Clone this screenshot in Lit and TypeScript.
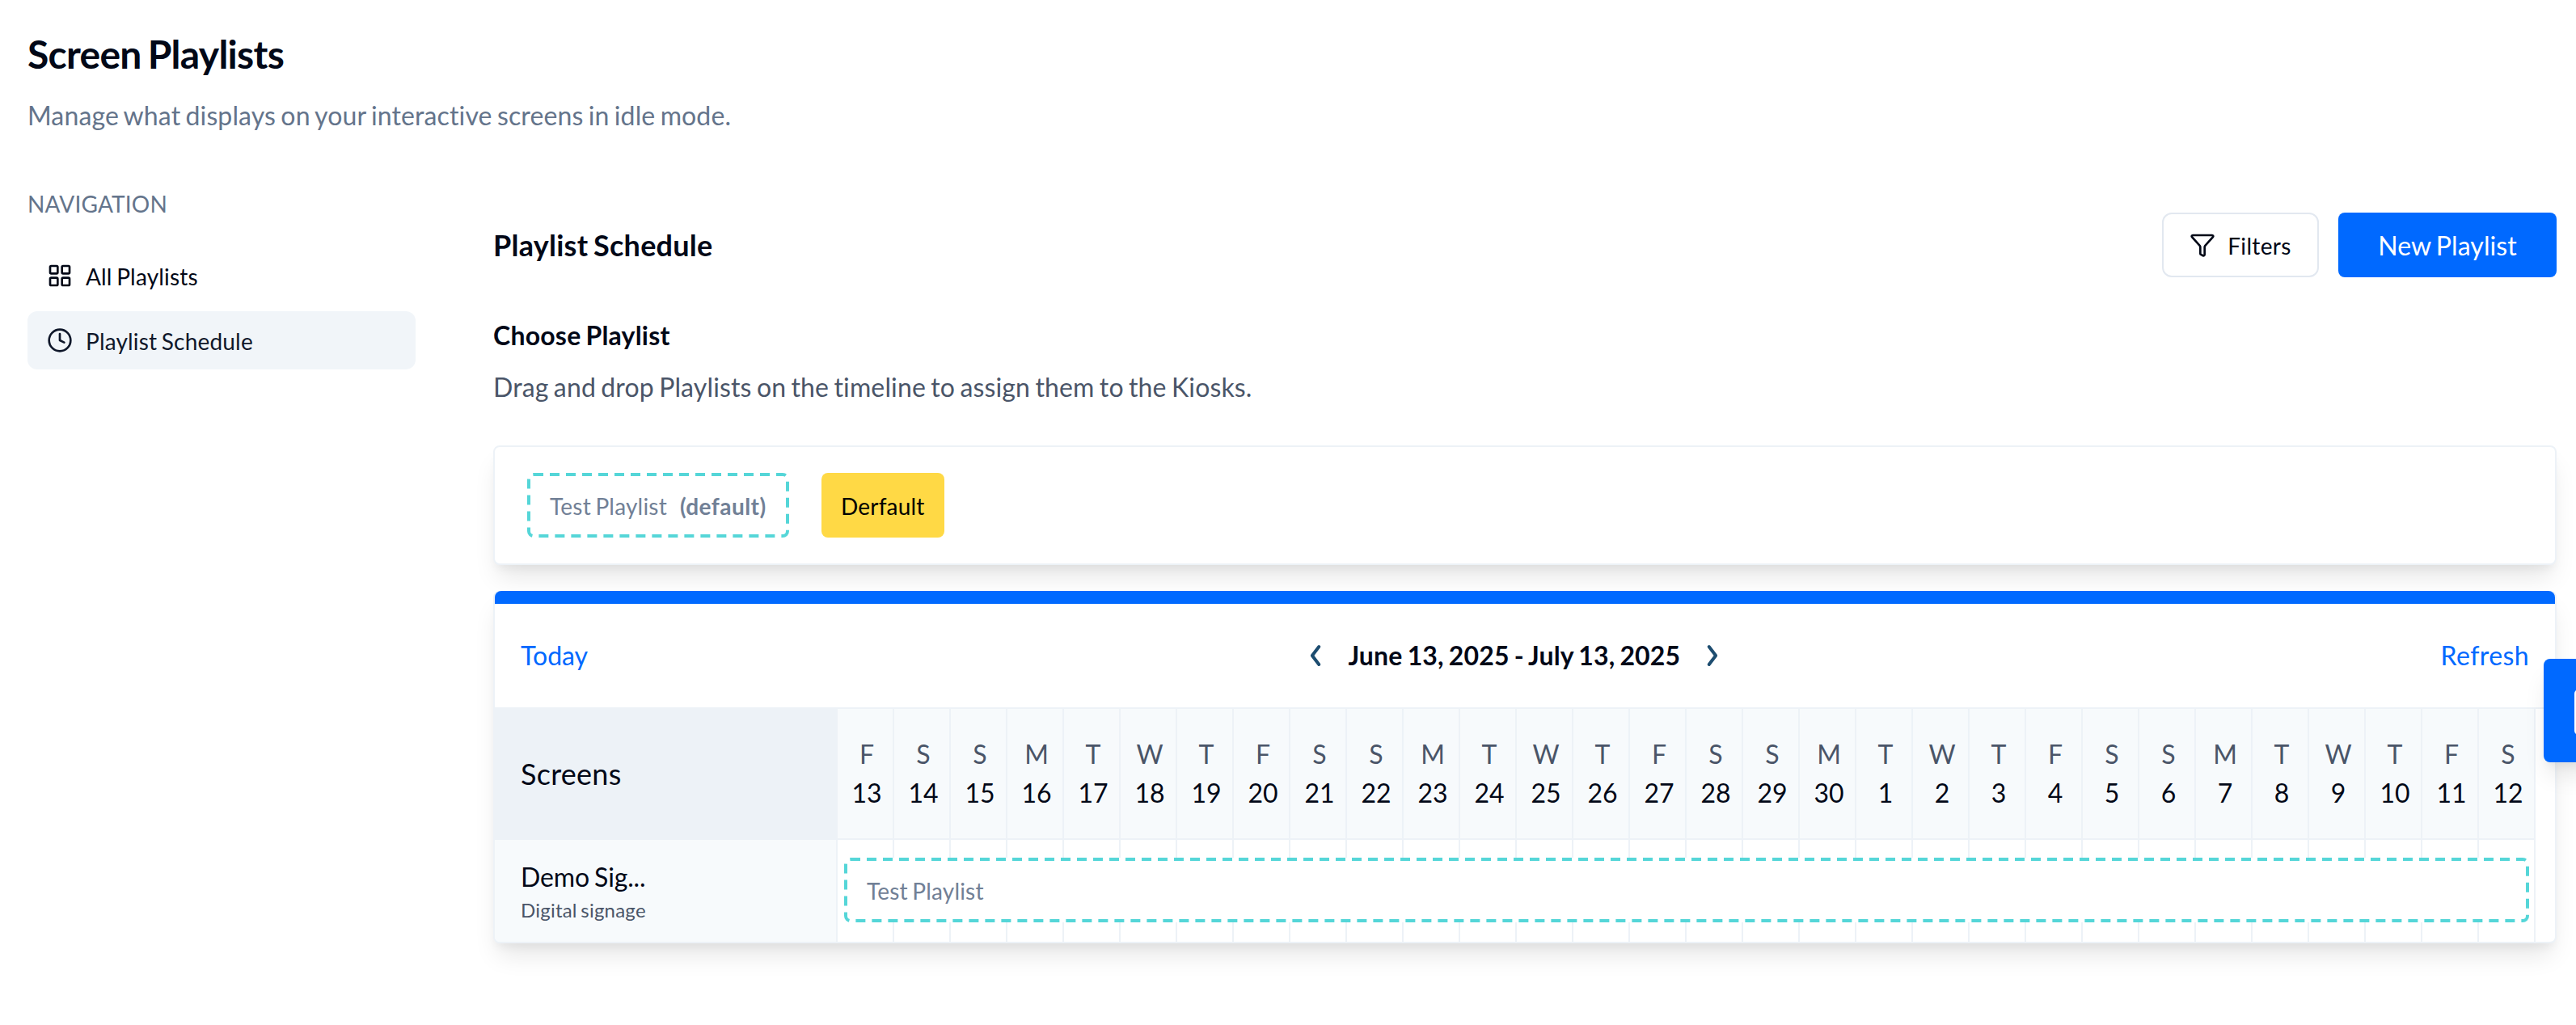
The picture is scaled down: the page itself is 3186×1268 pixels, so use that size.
import { LitElement, html, css, svg } from "lit";
import { customElement } from "lit/decorators.js";

const WEEKDAYS = ["S", "M", "T", "W", "T", "F", "S"];
const START = Date.UTC(2025, 5, 13);
const DAYS = Array.from({ length: 30 }, (_, i) => {
  const d = new Date(START + i * 86400000);
  return { letter: WEEKDAYS[d.getUTCDay()], num: d.getUTCDate() };
});

const icon = (cls: string, body: unknown) => html`
  <svg class=${cls} viewBox="0 0 24 24" fill="none" stroke="currentColor" stroke-width="2"
    stroke-linecap="round" stroke-linejoin="round">${body}</svg>`;

const gridIcon = svg`<rect width="7" height="7" x="3" y="3" rx="1"/><rect width="7" height="7" x="14" y="3" rx="1"/><rect width="7" height="7" x="14" y="14" rx="1"/><rect width="7" height="7" x="3" y="14" rx="1"/>`;
const clockIcon = svg`<circle cx="12" cy="12" r="10"/><polyline points="12 6 12 12 16 14"/>`;
const funnelIcon = svg`<path d="M10 20a1 1 0 0 0 .553.895l2 1A1 1 0 0 0 14 21v-7a2 2 0 0 1 .517-1.341L21.74 4.67A1 1 0 0 0 21 3H3a1 1 0 0 0-.742 1.67l7.225 7.989A2 2 0 0 1 10 14z"/>`;

@customElement("playlist-sidebar")
export class PlaylistSidebar extends LitElement {
  static styles = css`
    :host { display: block; width: 480px; flex: none; }
    .heading { color: #64748b; font-size: 28px; line-height: 40px; letter-spacing: 0.2px; }
    .items { display: flex; flex-direction: column; gap: 8px; margin-top: 33px; }
    .item {
      display: flex; align-items: center; height: 72px; padding: 0 24px; gap: 16px;
      border-radius: 12px; font-size: 28px; line-height: 40px; color: #020817; letter-spacing: 0.18px;
    }
    .item.active { background: #f1f5f9; color: #0f172a; }
    .label { padding-top: 2px; }
    .icon { width: 32px; height: 32px; display: block; }
  `;
  render() {
    return html`
      <div class="heading">NAVIGATION</div>
      <div class="items">
        <div class="item">${icon("icon", gridIcon)}<span class="label">All Playlists</span></div>
        <div class="item active">${icon("icon", clockIcon)}<span class="label">Playlist Schedule</span></div>
      </div>`;
  }
}

@customElement("playlist-timeline")
export class PlaylistTimeline extends LitElement {
  static styles = css`
    :host { display: block; }
    .card {
      box-sizing: border-box; height: 436px; border: 2px solid #edf2f7; border-top: 0;
      border-radius: 8px; background: #fff;
      box-shadow: 0 20px 30px -6px rgba(0, 0, 0, 0.1), 0 8px 12px -4px rgba(0, 0, 0, 0.05);
    }
    .accent { height: 16px; background: #0069ff; border-radius: 8px 8px 0 0; }
    .bar {
      display: flex; justify-content: space-between; align-items: center;
      height: 128px; padding: 0 32px; font-size: 32px; line-height: 48px;
    }
    .link { color: #0069ff; }
    .link.end { letter-spacing: 0.4px; }
    .range { display: flex; align-items: center; gap: 32px; font-weight: 700; }
    .dates { letter-spacing: 0.15px; }
    .chev { width: 16px; height: 28px; display: block; }
    .grid {
      display: grid; grid-template-columns: 424px repeat(30, 70px);
      grid-template-rows: 160px 2px 126px; border-top: 2px solid #edf2f7;
    }
    .head {
      background: #edf2f7; display: flex; align-items: center; padding: 0 0 2px 32px;
      font-size: 36px; grid-row: 1 / 3; letter-spacing: 0.26px;
    }
    .day {
      box-sizing: border-box; background: #f7fafc; border-right: 2px solid #edf2f7; grid-row: 1;
      display: flex; flex-direction: column; align-items: center; justify-content: center;
      padding-left: 4px; font-size: 32px; line-height: 48px;
    }
    .letter { color: #4a5568; }
    .rule { grid-row: 2; grid-column: 2 / -1; background: #edf2f7; }
    .screen {
      box-sizing: border-box; grid-row: 3; grid-column: 1; background: #f7fafc;
      border-right: 2px solid #edf2f7; border-bottom-left-radius: 6px; gap: 1px;
      display: flex; flex-direction: column; justify-content: center; padding: 0 0 2px 32px;
    }
    .name { font-size: 32px; line-height: 48px; letter-spacing: -0.15px; }
    .kind { font-size: 24px; line-height: 32px; color: #4a5568; letter-spacing: 0.22px; }
    .slot { grid-row: 3; border-right: 2px solid #edf2f7; }
    .event {
      box-sizing: border-box; grid-row: 3; grid-column: 2 / -1; align-self: start;
      height: 80px; margin: 22px 8px 0; padding: 2px 0 0 28px; display: flex; align-items: center;
      border-radius: 8px; background: #fff; color: #718096; position: relative;
      font-size: 28px; line-height: 40px; letter-spacing: 0.18px; z-index: 1;
    }
    .event::before {
      content: ""; position: absolute; left: 0; top: 0; width: 50%; height: 50%;
      box-sizing: border-box; border: 2px dashed #55d6d8; border-radius: 4px;
      transform: scale(2); transform-origin: 0 0;
    }
  `;
  render() {
    return html`
      <div class="card">
        <div class="accent"></div>
        <div class="bar">
          <span class="link">Today</span>
          <div class="range">
            <svg class="chev" viewBox="0 0 16 28" fill="none" stroke="#1d4d70" stroke-width="4" stroke-linecap="round" stroke-linejoin="round"><path d="M12.3 3L3.9 14l8.4 11"/></svg>
            <span class="dates">June 13, 2025 - July 13, 2025</span>
            <svg class="chev" viewBox="0 0 16 28" fill="none" stroke="#1d4d70" stroke-width="4" stroke-linecap="round" stroke-linejoin="round"><path d="M3.7 3l8.4 11-8.4 11"/></svg>
          </div>
          <span class="link end">Refresh</span>
        </div>
        <div class="grid">
          <div class="head">Screens</div>
          ${DAYS.map((d) => html`<div class="day"><span class="letter">${d.letter}</span><span>${d.num}</span></div>`)}
          <div class="rule"></div>
          <div class="screen"><span class="name">Demo Sig...</span><span class="kind">Digital signage</span></div>
          ${DAYS.map((_, i) => html`<div class="slot" style="grid-column:${i + 2}"></div>`)}
          <div class="event">Test Playlist</div>
        </div>
      </div>`;
  }
}

@customElement("app-root")
export class AppRoot extends LitElement {
  static styles = css`
    :host {
      display: block; position: relative; box-sizing: border-box; width: 3186px; height: 1268px;
      overflow: hidden; background: #fff; color: #020817; padding: 31px 24px 0 34px;
      font-family: Lato, "Liberation Sans", sans-serif;
      font-variant-ligatures: none; word-spacing: -0.064em;
    }
    .title { margin: 0; font-size: 48px; line-height: 72px; font-weight: 700; letter-spacing: -0.7px; word-spacing: -0.064em; }
    .sub { margin: 16px 0 0; font-size: 32px; line-height: 48px; color: #64748b; letter-spacing: 0.13px; word-spacing: -0.064em; }
    .layout { display: flex; gap: 96px; margin-top: 65px; }
    .main { flex: 1; min-width: 0; padding-top: 31px; }
    .top { display: flex; align-items: center; height: 80px; gap: 24px; }
    .h2 { flex: 1; margin: 0; font-size: 36px; line-height: 56px; font-weight: 700; letter-spacing: 0.26px; word-spacing: -0.064em; }
    .btn {
      box-sizing: border-box; height: 80px; display: flex; align-items: center; justify-content: center;
    }
    .btn.filters { width: 194px; border: 2px solid #e2e8f0; border-radius: 12px; font-size: 28px; gap: 15px; letter-spacing: 0.37px; }
    .label { padding-top: 2px; }
    .btn.primary { width: 270px; border-radius: 8px; background: #0069ff; color: #fff; font-size: 32px; letter-spacing: 0.1px; }
    .icon { width: 32px; height: 32px; display: block; }
    .h3 { margin: 48px 0 0; font-size: 32px; line-height: 48px; font-weight: 700; letter-spacing: 0.22px; }
    .hint { margin: 16px 0 0; font-size: 32px; line-height: 48px; color: #4a5568; letter-spacing: 0.15px; }
    .choices {
      box-sizing: border-box; display: flex; align-items: center; gap: 40px; height: 148px;
      margin-top: 48px; padding: 0 40px; border: 2px solid #edf2f7; border-radius: 8px; background: #fff;
      box-shadow: 0 20px 30px -6px rgba(0, 0, 0, 0.1), 0 8px 12px -4px rgba(0, 0, 0, 0.05);
    }
    .sub, .title, .h2, .h3, .hint, .btn, .chip, playlist-sidebar, playlist-timeline { word-spacing: -0.064em; }
    .chip {
      box-sizing: border-box; height: 80px; display: flex; align-items: center; gap: 16px;
      padding: 2px 24px 0; border-radius: 8px; font-size: 28px; line-height: 40px; letter-spacing: 0.2px;
    }
    .chip.dashed { color: #718096; width: 324px; padding-left: 28px; position: relative; }
    .chip.dashed::before {
      content: ""; position: absolute; left: 0; top: 0; width: 50%; height: 50%;
      box-sizing: border-box; border: 2px dashed #55d6d8; border-radius: 4px;
      transform: scale(2); transform-origin: 0 0;
    }
    .note { letter-spacing: 0.45px; }
    .chip.solid { background: #ffd945; color: #000; width: 152px; }
    playlist-timeline { margin-top: 32px; }
    playlist-sidebar, playlist-timeline { font-size: 28px; }
    .tab {
      position: absolute; left: 3146px; top: 815px; width: 120px; height: 128px;
      box-sizing: border-box; padding: 38px 0 0 38.3px;
      border-radius: 8px; background: #0069ff;
      box-shadow: 0 20px 30px -6px rgba(0, 0, 0, 0.1), 0 8px 12px -4px rgba(0, 0, 0, 0.05);
    }
    .glyph { display: block; width: 56px; height: 56px; }
  `;
  render() {
    return html`
      <h1 class="title">Screen Playlists</h1>
      <p class="sub">Manage what displays on your interactive screens in idle mode.</p>
      <div class="layout">
        <playlist-sidebar></playlist-sidebar>
        <div class="main">
          <div class="top">
            <h2 class="h2">Playlist Schedule</h2>
            <div class="btn filters">${icon("icon", funnelIcon)}<span class="label">Filters</span></div>
            <div class="btn primary">New Playlist</div>
          </div>
          <h3 class="h3">Choose Playlist</h3>
          <p class="hint">Drag and drop Playlists on the timeline to assign them to the Kiosks.</p>
          <div class="choices">
            <div class="chip dashed"><span>Test Playlist</span><b class="note">(default)</b></div>
            <div class="chip solid">Derfault</div>
          </div>
          <playlist-timeline></playlist-timeline>
        </div>
      </div>
      <div class="tab">
        <svg class="glyph" viewBox="0 0 56 56"><rect width="56" height="56" rx="5" fill="#fff"/></svg>
      </div>`;
  }
}
